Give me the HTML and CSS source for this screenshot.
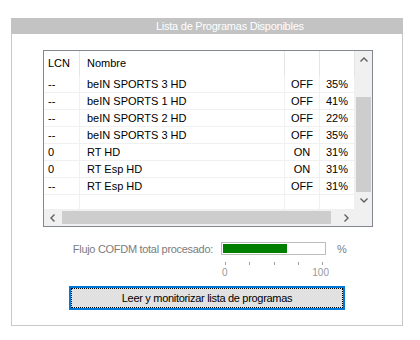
FILE: index.html
```html
<!DOCTYPE html>
<html lang="es">

<head>
    <meta charset="UTF-8">
    <title>Lista de Programas</title>
    <link rel="stylesheet" href="styles.css">
</head>

<body>
    <div class="panel">
        <div class="panel-title">Lista de Programas Disponibles</div>
        <div class="panel-body">
            <div class="listbox">
                <div class="list-view">
                    <div class="hcell">LCN</div>
                    <div class="hcell">Nombre</div>
                    <div class="hcell"></div>
                    <div class="hcell"></div>

                    <div class="cell">--</div><div class="cell">beIN SPORTS 3 HD</div><div class="cell mid">OFF</div><div class="cell mid">35%</div>
                    <div class="cell">--</div><div class="cell">beIN SPORTS 1 HD</div><div class="cell mid">OFF</div><div class="cell mid">41%</div>
                    <div class="cell">--</div><div class="cell">beIN SPORTS 2 HD</div><div class="cell mid">OFF</div><div class="cell mid">22%</div>
                    <div class="cell">--</div><div class="cell">beIN SPORTS 3 HD</div><div class="cell mid">OFF</div><div class="cell mid">35%</div>
                    <div class="cell">0</div><div class="cell">RT HD</div><div class="cell mid">ON</div><div class="cell mid">31%</div>
                    <div class="cell">0</div><div class="cell">RT Esp HD</div><div class="cell mid">ON</div><div class="cell mid">31%</div>
                    <div class="cell">--</div><div class="cell">RT Esp HD</div><div class="cell mid">OFF</div><div class="cell mid">31%</div>

                    <div class="fill"></div><div class="fill"></div><div class="fill"></div><div class="fill"></div>
                </div>

                <div class="vscroll">
                    <div class="sb-btn">
                        <svg width="8" height="5" viewBox="0 0 8 5"><polyline points="0.5,4.5 4,1 7.5,4.5" fill="none" stroke="#606060" stroke-width="1.4"/></svg>
                    </div>
                    <div class="vtrack"><div class="vthumb"></div></div>
                    <div class="sb-btn">
                        <svg width="8" height="5" viewBox="0 0 8 5"><polyline points="0.5,0.5 4,4 7.5,0.5" fill="none" stroke="#606060" stroke-width="1.4"/></svg>
                    </div>
                </div>

                <div class="hscroll">
                    <div class="sb-btn">
                        <svg width="5" height="8" viewBox="0 0 5 8"><polyline points="4.5,0.5 1,4 4.5,7.5" fill="none" stroke="#606060" stroke-width="1.4"/></svg>
                    </div>
                    <div class="htrack"><div class="hthumb"></div></div>
                    <div class="sb-btn">
                        <svg width="5" height="8" viewBox="0 0 5 8"><polyline points="0.5,0.5 4,4 0.5,7.5" fill="none" stroke="#606060" stroke-width="1.4"/></svg>
                    </div>
                </div>

                <div class="corner"></div>
            </div>

            <div class="flow-row">
                <span class="flow-label">Flujo COFDM total procesado:</span>
                <div class="meter"><div class="meter-fill" style="width: 63%"></div></div>
                <span class="flow-unit">%</span>
            </div>
            <div class="scale">
                <span class="tick"></span><span class="tick"></span><span class="tick"></span><span class="tick"></span><span class="tick"></span>
            </div>
            <div class="scale-labels"><span>0</span><span>100</span></div>

            <button class="btn"><span class="btn-focus">Leer y monitorizar lista de programas</span></button>
        </div>
    </div>
</body>

</html>
```

FILE: styles.css
```css
body {
    margin: 0;
    background: #fff;
    font-family: "Liberation Sans", Arial, sans-serif;
    font-size: 11px;
    color: #000;
}

.panel {
    width: 392px;
    margin: 18px 0 0 11px;
}

.panel-title {
    height: 16px;
    line-height: 16px;
    padding-left: 145px;
    background: #c3c3c3;
    color: #fff;
    letter-spacing: -0.25px;
}

.panel-body {
    height: 292px;
    box-sizing: border-box;
    border: 1px solid #c8c8c8;
    border-top: none;
    padding: 16px 0 0 0;
}

/* list control */
.listbox {
    width: 330px;
    height: 177px;
    box-sizing: border-box;
    margin-left: 31px;
    border: 1px solid #828790;
    display: grid;
    grid-template-columns: 311px 17px;
    grid-template-rows: 158px 17px;
    background: #fff;
}

.list-view {
    display: grid;
    grid-template-columns: 36px 205px 35px 35px;
    grid-template-rows: 25px repeat(7, 17px) 1fr;
    overflow: hidden;
}

.hcell {
    border-right: 1px solid #e5e5e5;
    padding-left: 4px;
    line-height: 25px;
    white-space: nowrap;
}

.hcell:nth-child(2) {
    padding-left: 7px;
}

.cell {
    border-bottom: 1px solid #f0f0f0;
    border-right: 1px solid #f0f0f0;
    padding-left: 4px;
    line-height: 16px;
    white-space: nowrap;
}

.cell:nth-child(4n+2) {
    padding-left: 7px;
}

.cell.mid {
    padding-left: 0;
    text-align: center;
}

.fill {
    border-right: 1px solid #f0f0f0;
}

/* scrollbars */
.vscroll {
    display: flex;
    flex-direction: column;
    background: #f0f0f0;
}

.hscroll {
    display: flex;
    background: #f0f0f0;
}

.sb-btn {
    width: 17px;
    height: 17px;
    flex: none;
    display: flex;
    align-items: center;
    justify-content: center;
}

.vtrack {
    flex: 1;
    display: flex;
    flex-direction: column;
    justify-content: flex-end;
    padding: 0 1px;
}

.vthumb {
    height: 95px;
    background: #cdcdcd;
}

.htrack {
    flex: 1;
    padding: 2px 7px 2px 1px;
}

.hthumb {
    height: 100%;
    background: #cdcdcd;
}

.corner {
    background: #f0f0f0;
}

/* flow meter */
.flow-row {
    display: flex;
    align-items: center;
    margin-top: 15px;
    height: 13px;
    color: #7c7c7c;
}

.flow-label {
    width: 201px;
    margin-right: 8px;
    text-align: right;
    white-space: nowrap;
    letter-spacing: -0.3px;
}

.meter {
    width: 105px;
    height: 13px;
    box-sizing: border-box;
    border: 1px solid #bcbcbc;
    padding: 1px;
    background: #fff;
}

.meter-fill {
    height: 100%;
    background: #007f00;
}

.flow-unit {
    margin-left: 11px;
}

.scale {
    width: 105px;
    height: 3px;
    box-sizing: border-box;
    margin: 7px 0 0 209px;
    padding: 0 3px 0 4px;
    display: flex;
    justify-content: space-between;
}

.tick {
    width: 1px;
    background: #a0a0a0;
}

.scale-labels {
    width: 107px;
    margin: 2px 0 0 210px;
    display: flex;
    justify-content: space-between;
    font-size: 10px;
    line-height: 12px;
    color: #999;
}

/* button */
.btn {
    display: block;
    width: 276px;
    height: 24px;
    margin: 7px auto 0;
    padding: 1px;
    border: 1px solid #0078d7;
    box-shadow: inset 0 0 0 1px #0078d7;
    background: #e1e1e1;
    font-family: "Liberation Sans", Arial, sans-serif;
    font-size: 11px;
    letter-spacing: -0.3px;
    color: #000;
}

.btn-focus {
    display: block;
    height: 100%;
    box-sizing: border-box;
    border: 1px dotted #000;
    line-height: 18px;
}
```
